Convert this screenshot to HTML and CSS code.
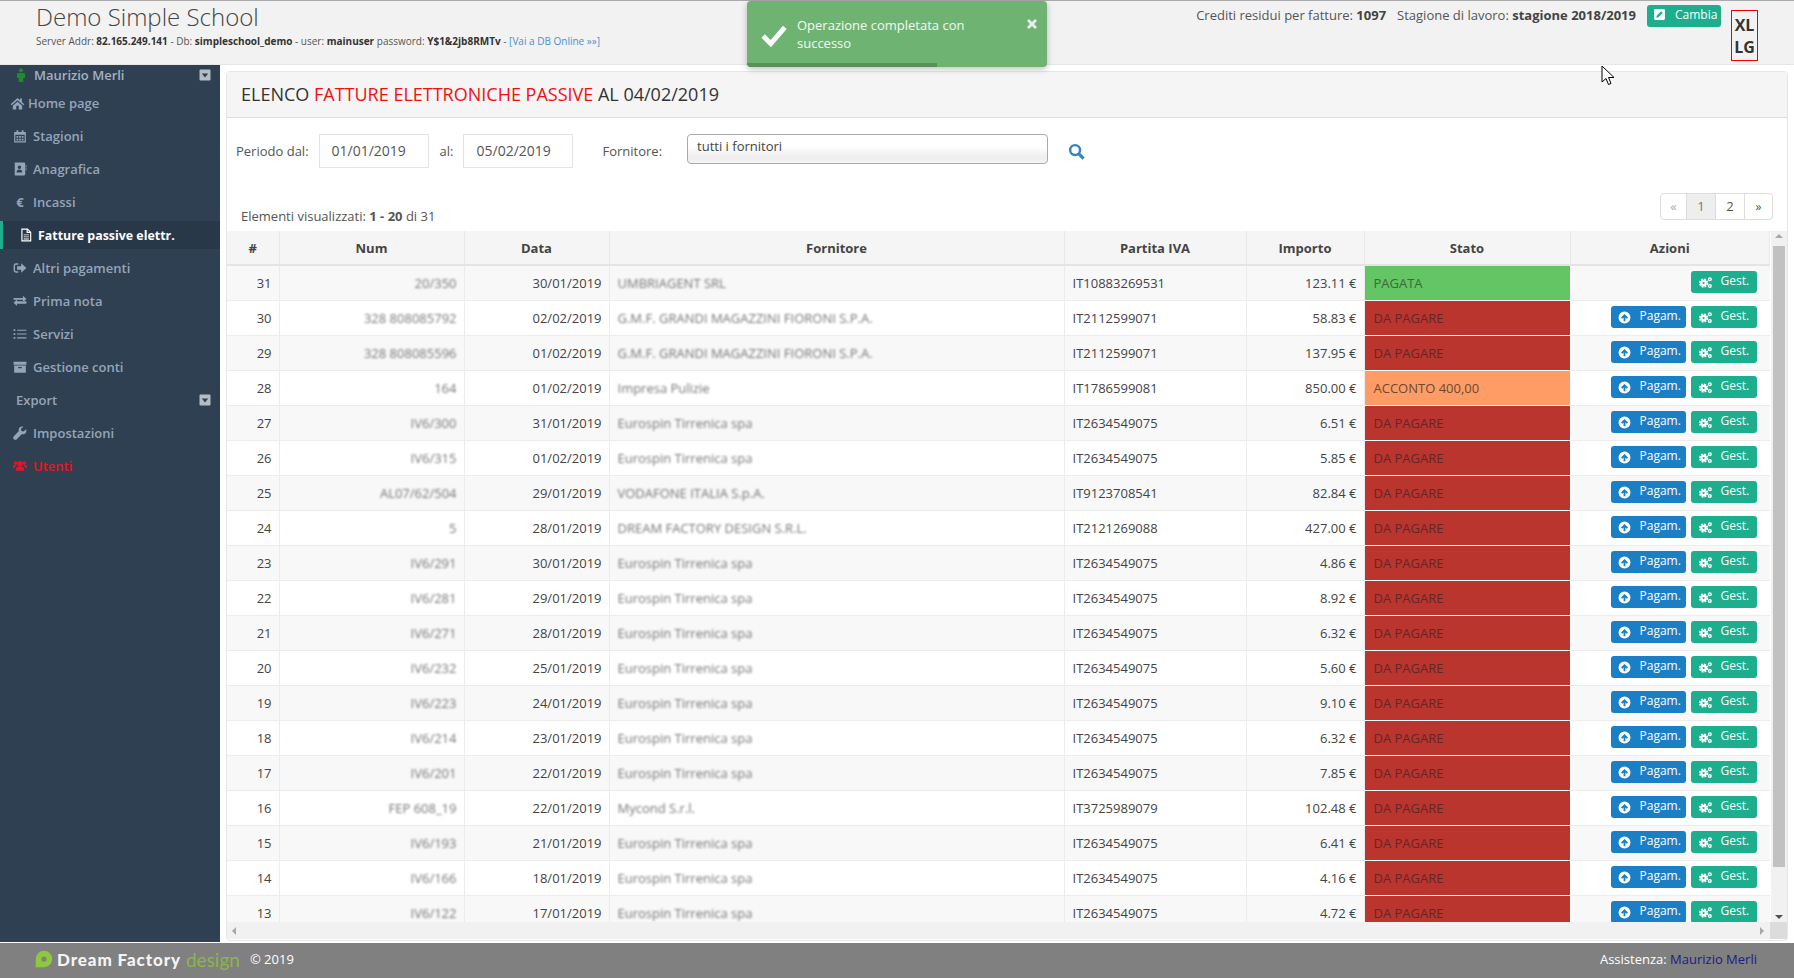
FILE: index.html
```html
<!DOCTYPE html>
<html lang="en">
<head>
    <meta charset="UTF-8">
    <title>Demo Simple School</title>
    <link rel="stylesheet" href="styles.css">
</head>
<body>
    <svg class="icon-defs" xmlns="http://www.w3.org/2000/svg">
        <symbol id="i-home" viewBox="0 0 24 24"><path d="M12 3 1 13l1.6 1.8L12 6.6l9.4 8.2L23 13l-4-3.5V4h-3v2.9zM4.500 15.500V21.500h5.500v-6h4v6h5.500v-6L12 9z"/></symbol>
        <symbol id="i-calendar" viewBox="0 0 24 24"><path fill-rule="evenodd" d="M2 5h4V2h3v3h6V2h3v3h4v18H2zM4 10v11h16V10zM6 12h3v3H6zm4.500 0h3v3h-3zm4.500 0h3v3h-3zM6 16.500h3v3H6zm4.500 0h3v3h-3zm4.500 0h3v3h-3z"/></symbol>
        <symbol id="i-book" viewBox="0 0 24 24"><path fill-rule="evenodd" d="M3 1h16a2 2 0 0 1 2 2v18a2 2 0 0 1-2 2H3zM11 6a3 3 0 1 0 0 6 3 3 0 0 0 0-6zM6 18h10c0-3-2-5-5-5s-5 2-5 5zM22 5h1v4h-1zm0 5h1v4h-1z"/></symbol>
        <symbol id="i-file" viewBox="0 0 24 24"><path fill-rule="evenodd" d="M4 1h11l6 6v16H4zM6 3v18h13V8.500h-6V3zm9 .5v3h3zM8 11h9v1.500H8zm0 3.500h9V16H8zm0 3.500h9v1.500H8z"/></symbol>
        <symbol id="i-out" viewBox="0 0 24 24"><path d="M9 4H5a4 4 0 0 0-4 4v8a4 4 0 0 0 4 4h4v-2.500H5A1.500 1.500 0 0 1 3.500 16V8A1.500 1.500 0 0 1 5 6.500h4zM14 4v5H7v6h7v5l9-8z"/></symbol>
        <symbol id="i-exchange" viewBox="0 0 24 24"><path d="M1 8h16V4l6 5.500-6 5.500v-4H1zM23 13.500H7v-3l-6 5.500 6 5.500v-4h16z" transform="translate(0 -1)"/></symbol>
        <symbol id="i-list" viewBox="0 0 24 24"><path d="M1 4h3v3H1zm6 .5h16v2H7zM1 10.500h3v3H1zm6 .5h16v2H7zM1 17h3v3H1zm6 .5h16v2H7z"/></symbol>
        <symbol id="i-archive" viewBox="0 0 24 24"><path fill-rule="evenodd" d="M1 3h22v5H1zM2 9.500h20V22H2zM9 12v2h6v-2z"/></symbol>
        <symbol id="i-wrench" viewBox="0 0 24 24"><path d="M22.500 5.500 18 9.500l-3.500-1-1-3.500L18 1c-3.500-1-7 .5-8 3.500-.5 1.500-.4 3 .1 4.200L1.500 17.500a3.500 3.500 0 0 0 5 5l8.800-8.800c1.300.5 2.800.5 4.200 0 3-1 4-4.700 3-8.200z"/></symbol>
        <symbol id="i-users" viewBox="0 0 24 24"><circle cx="12" cy="8" r="4.500"/><circle cx="4.500" cy="7" r="3"/><circle cx="19.500" cy="7" r="3"/><path d="M5 20v-3c0-3 3-4.500 7-4.500s7 1.500 7 4.500v3zM0 15v-2c0-2 2-3 4.500-3 .8 0 1.500.1 2 .3-1.500 1-2.800 2.500-3 4.700zM24 15v-2c0-2-2-3-4.500-3-.8 0-1.500.1-2 .3 1.500 1 2.800 2.500 3 4.700z"/></symbol>
        <symbol id="i-caret" viewBox="0 0 24 24"><path fill-rule="evenodd" d="M3 1h18a2 2 0 0 1 2 2v18a2 2 0 0 1-2 2H3a2 2 0 0 1-2-2V3a2 2 0 0 1 2-2zM5.500 9l6.500 8 6.500-8z"/></symbol>
        <symbol id="i-male" viewBox="0 0 24 24"><circle cx="12" cy="4" r="3.500"/><path d="M7 8.500h10a2 2 0 0 1 2 2V17h-3v7H8v-7H5v-6.500a2 2 0 0 1 2-2z"/></symbol>
        <symbol id="i-edit" viewBox="0 0 24 24"><path fill-rule="evenodd" d="M4 2h16a2 2 0 0 1 2 2v16a2 2 0 0 1-2 2H4a2 2 0 0 1-2-2V4a2 2 0 0 1 2-2zM15 6 7 14l-1 4 4-1 8-8z"/></symbol>
        <symbol id="i-up" viewBox="0 0 24 24"><path fill-rule="evenodd" d="M12 1a11 11 0 1 1 0 22 11 11 0 0 1 0-22zM12 5.500 5.500 12 8 14.300l2.300-2.300V19h3.400v-7l2.300 2.300L18.500 12z"/></symbol>
        <symbol id="i-cogs" viewBox="0 0 24 24"><circle cx="8.500" cy="13" r="4" fill="none" stroke="currentColor" stroke-width="4"/><circle cx="8.500" cy="13" r="7" fill="none" stroke="currentColor" stroke-width="3" stroke-dasharray="3.500 2"/><circle cx="20" cy="6" r="2.500" fill="none" stroke="currentColor" stroke-width="2.500"/><circle cx="20" cy="18.500" r="2.500" fill="none" stroke="currentColor" stroke-width="2.500"/></symbol>
    </svg>

    <header class="top">
        <div class="brand">
            <h1 class="brand-title">Demo Simple School</h1>
            <p class="brand-sub">Server Addr: <b>82.165.249.141</b> - Db: <b>simpleschool_demo</b> - user: <b>mainuser</b> password: <b>Y$1&amp;2jb8RMTv</b> - <a class="brand-link" href="#">[Vai a DB Online »»]</a></p>
        </div>
        <div class="top-right">
            <span class="top-info">Crediti residui per fatture: <b>1097</b></span>
            <span class="top-info">Stagione di lavoro: <b>stagione 2018/2019</b></span>
            <a class="btn btn-green btn-change" href="#"><svg class="btn-icon"><use href="#i-edit"/></svg>Cambia</a>
            <div class="size-box">XL<br>LG</div>
        </div>
    </header>

    <div class="toast">
        <svg class="toast-check" viewBox="0 0 24 24"><path d="M2 13l7 7L22 5" fill="none" stroke="#fff" stroke-width="4.500"/></svg>
        <span class="toast-text">Operazione completata con successo</span>
        <svg class="toast-close" viewBox="0 0 12 12"><path d="M2 2l8 8M10 2l-8 8" fill="none" stroke="#e4efe5" stroke-width="3"/></svg>
        <div class="toast-bar"></div>
    </div>

    <div class="middle">
        <nav class="side">
            <div class="side-user"><svg class="side-icon user-icon"><use href="#i-male"/></svg>Maurizio Merli<svg class="side-caret"><use href="#i-caret"/></svg></div>
            <a class="side-item side-home" href="#"><svg class="side-icon"><use href="#i-home"/></svg>Home page</a>
            <a class="side-item" href="#"><svg class="side-icon"><use href="#i-calendar"/></svg>Stagioni</a>
            <a class="side-item" href="#"><svg class="side-icon"><use href="#i-book"/></svg>Anagrafica</a>
            <a class="side-item" href="#"><span class="side-icon side-euro">€</span>Incassi</a>
            <a class="side-item side-active" href="#"><svg class="side-icon"><use href="#i-file"/></svg>Fatture passive elettr.</a>
            <a class="side-item" href="#"><svg class="side-icon"><use href="#i-out"/></svg>Altri pagamenti</a>
            <a class="side-item" href="#"><svg class="side-icon"><use href="#i-exchange"/></svg>Prima nota</a>
            <a class="side-item" href="#"><svg class="side-icon"><use href="#i-list"/></svg>Servizi</a>
            <a class="side-item" href="#"><svg class="side-icon"><use href="#i-archive"/></svg>Gestione conti</a>
            <a class="side-item side-export" href="#">Export<svg class="side-caret"><use href="#i-caret"/></svg></a>
            <a class="side-item" href="#"><svg class="side-icon"><use href="#i-wrench"/></svg>Impostazioni</a>
            <a class="side-item side-red" href="#"><svg class="side-icon"><use href="#i-users"/></svg>Utenti</a>
        </nav>

        <main class="main">
            <section class="panel">
                <h2 class="panel-title">ELENCO <span class="red">FATTURE ELETTRONICHE PASSIVE</span> AL 04/02/2019</h2>
                <div class="filters">
                    <label class="filter-label">Periodo dal:</label>
                    <div class="date-input">01/01/2019</div>
                    <label class="filter-label filter-al">al:</label>
                    <div class="date-input">05/02/2019</div>
                    <label class="filter-label filter-forn">Fornitore:</label>
                    <div class="select-box">tutti i fornitori</div>
                    <svg class="search-icon" viewBox="0 0 24 24"><circle cx="10" cy="10" r="7" fill="none" stroke="#3583c5" stroke-width="3.500"/><path d="M15 15l7 7" stroke="#3583c5" stroke-width="4.500"/></svg>
                </div>
                <div class="list-bar">
                    <span class="list-count">Elementi visualizzati: <b>1 - 20</b> di 31</span>
                    <ul class="pager">
                        <li class="pager-off">«</li>
                        <li class="pager-on">1</li>
                        <li>2</li>
                        <li class="pager-next">»</li>
                    </ul>
                </div>
                <div class="grid-wrap">
                    <div class="grid-clip">
                        <table class="grid">
                            <colgroup>
                                <col class="c-id"><col class="c-num"><col class="c-date"><col class="c-forn"><col class="c-iva"><col class="c-imp"><col class="c-stato"><col class="c-az">
                            </colgroup>
                            <thead>
                                <tr><th>#</th><th>Num</th><th>Data</th><th>Fornitore</th><th>Partita IVA</th><th>Importo</th><th>Stato</th><th>Azioni</th></tr>
                            </thead>
                            <tbody>
                                <tr><td class="r">31</td><td class="r"><span class="blur">20/350</span></td><td class="r">30/01/2019</td><td><span class="blur">UMBRIAGENT SRL</span></td><td>IT10883269531</td><td class="r">123.11 €</td><td class="st-ok">PAGATA</td><td class="acts"><a class="btn btn-green" href="#"><svg class="btn-icon"><use href="#i-cogs"/></svg>Gest.</a></td></tr>
                                <tr><td class="r">30</td><td class="r"><span class="blur">328 808085792</span></td><td class="r">02/02/2019</td><td><span class="blur">G.M.F. GRANDI MAGAZZINI FIORONI S.P.A.</span></td><td>IT2112599071</td><td class="r">58.83 €</td><td class="st-no">DA PAGARE</td><td class="acts"><a class="btn btn-blue" href="#"><svg class="btn-icon"><use href="#i-up"/></svg>Pagam.</a><a class="btn btn-green" href="#"><svg class="btn-icon"><use href="#i-cogs"/></svg>Gest.</a></td></tr>
                                <tr><td class="r">29</td><td class="r"><span class="blur">328 808085596</span></td><td class="r">01/02/2019</td><td><span class="blur">G.M.F. GRANDI MAGAZZINI FIORONI S.P.A.</span></td><td>IT2112599071</td><td class="r">137.95 €</td><td class="st-no">DA PAGARE</td><td class="acts"><a class="btn btn-blue" href="#"><svg class="btn-icon"><use href="#i-up"/></svg>Pagam.</a><a class="btn btn-green" href="#"><svg class="btn-icon"><use href="#i-cogs"/></svg>Gest.</a></td></tr>
                                <tr><td class="r">28</td><td class="r"><span class="blur">164</span></td><td class="r">01/02/2019</td><td><span class="blur">Impresa Pulizie</span></td><td>IT1786599081</td><td class="r">850.00 €</td><td class="st-part">ACCONTO 400,00</td><td class="acts"><a class="btn btn-blue" href="#"><svg class="btn-icon"><use href="#i-up"/></svg>Pagam.</a><a class="btn btn-green" href="#"><svg class="btn-icon"><use href="#i-cogs"/></svg>Gest.</a></td></tr>
                                <tr><td class="r">27</td><td class="r"><span class="blur">IV6/300</span></td><td class="r">31/01/2019</td><td><span class="blur">Eurospin Tirrenica spa</span></td><td>IT2634549075</td><td class="r">6.51 €</td><td class="st-no">DA PAGARE</td><td class="acts"><a class="btn btn-blue" href="#"><svg class="btn-icon"><use href="#i-up"/></svg>Pagam.</a><a class="btn btn-green" href="#"><svg class="btn-icon"><use href="#i-cogs"/></svg>Gest.</a></td></tr>
                                <tr><td class="r">26</td><td class="r"><span class="blur">IV6/315</span></td><td class="r">01/02/2019</td><td><span class="blur">Eurospin Tirrenica spa</span></td><td>IT2634549075</td><td class="r">5.85 €</td><td class="st-no">DA PAGARE</td><td class="acts"><a class="btn btn-blue" href="#"><svg class="btn-icon"><use href="#i-up"/></svg>Pagam.</a><a class="btn btn-green" href="#"><svg class="btn-icon"><use href="#i-cogs"/></svg>Gest.</a></td></tr>
                                <tr><td class="r">25</td><td class="r"><span class="blur">AL07/62/504</span></td><td class="r">29/01/2019</td><td><span class="blur">VODAFONE ITALIA S.p.A.</span></td><td>IT9123708541</td><td class="r">82.84 €</td><td class="st-no">DA PAGARE</td><td class="acts"><a class="btn btn-blue" href="#"><svg class="btn-icon"><use href="#i-up"/></svg>Pagam.</a><a class="btn btn-green" href="#"><svg class="btn-icon"><use href="#i-cogs"/></svg>Gest.</a></td></tr>
                                <tr><td class="r">24</td><td class="r"><span class="blur">5</span></td><td class="r">28/01/2019</td><td><span class="blur">DREAM FACTORY DESIGN S.R.L.</span></td><td>IT2121269088</td><td class="r">427.00 €</td><td class="st-no">DA PAGARE</td><td class="acts"><a class="btn btn-blue" href="#"><svg class="btn-icon"><use href="#i-up"/></svg>Pagam.</a><a class="btn btn-green" href="#"><svg class="btn-icon"><use href="#i-cogs"/></svg>Gest.</a></td></tr>
                                <tr><td class="r">23</td><td class="r"><span class="blur">IV6/291</span></td><td class="r">30/01/2019</td><td><span class="blur">Eurospin Tirrenica spa</span></td><td>IT2634549075</td><td class="r">4.86 €</td><td class="st-no">DA PAGARE</td><td class="acts"><a class="btn btn-blue" href="#"><svg class="btn-icon"><use href="#i-up"/></svg>Pagam.</a><a class="btn btn-green" href="#"><svg class="btn-icon"><use href="#i-cogs"/></svg>Gest.</a></td></tr>
                                <tr><td class="r">22</td><td class="r"><span class="blur">IV6/281</span></td><td class="r">29/01/2019</td><td><span class="blur">Eurospin Tirrenica spa</span></td><td>IT2634549075</td><td class="r">8.92 €</td><td class="st-no">DA PAGARE</td><td class="acts"><a class="btn btn-blue" href="#"><svg class="btn-icon"><use href="#i-up"/></svg>Pagam.</a><a class="btn btn-green" href="#"><svg class="btn-icon"><use href="#i-cogs"/></svg>Gest.</a></td></tr>
                                <tr><td class="r">21</td><td class="r"><span class="blur">IV6/271</span></td><td class="r">28/01/2019</td><td><span class="blur">Eurospin Tirrenica spa</span></td><td>IT2634549075</td><td class="r">6.32 €</td><td class="st-no">DA PAGARE</td><td class="acts"><a class="btn btn-blue" href="#"><svg class="btn-icon"><use href="#i-up"/></svg>Pagam.</a><a class="btn btn-green" href="#"><svg class="btn-icon"><use href="#i-cogs"/></svg>Gest.</a></td></tr>
                                <tr><td class="r">20</td><td class="r"><span class="blur">IV6/232</span></td><td class="r">25/01/2019</td><td><span class="blur">Eurospin Tirrenica spa</span></td><td>IT2634549075</td><td class="r">5.60 €</td><td class="st-no">DA PAGARE</td><td class="acts"><a class="btn btn-blue" href="#"><svg class="btn-icon"><use href="#i-up"/></svg>Pagam.</a><a class="btn btn-green" href="#"><svg class="btn-icon"><use href="#i-cogs"/></svg>Gest.</a></td></tr>
                                <tr><td class="r">19</td><td class="r"><span class="blur">IV6/223</span></td><td class="r">24/01/2019</td><td><span class="blur">Eurospin Tirrenica spa</span></td><td>IT2634549075</td><td class="r">9.10 €</td><td class="st-no">DA PAGARE</td><td class="acts"><a class="btn btn-blue" href="#"><svg class="btn-icon"><use href="#i-up"/></svg>Pagam.</a><a class="btn btn-green" href="#"><svg class="btn-icon"><use href="#i-cogs"/></svg>Gest.</a></td></tr>
                                <tr><td class="r">18</td><td class="r"><span class="blur">IV6/214</span></td><td class="r">23/01/2019</td><td><span class="blur">Eurospin Tirrenica spa</span></td><td>IT2634549075</td><td class="r">6.32 €</td><td class="st-no">DA PAGARE</td><td class="acts"><a class="btn btn-blue" href="#"><svg class="btn-icon"><use href="#i-up"/></svg>Pagam.</a><a class="btn btn-green" href="#"><svg class="btn-icon"><use href="#i-cogs"/></svg>Gest.</a></td></tr>
                                <tr><td class="r">17</td><td class="r"><span class="blur">IV6/201</span></td><td class="r">22/01/2019</td><td><span class="blur">Eurospin Tirrenica spa</span></td><td>IT2634549075</td><td class="r">7.85 €</td><td class="st-no">DA PAGARE</td><td class="acts"><a class="btn btn-blue" href="#"><svg class="btn-icon"><use href="#i-up"/></svg>Pagam.</a><a class="btn btn-green" href="#"><svg class="btn-icon"><use href="#i-cogs"/></svg>Gest.</a></td></tr>
                                <tr><td class="r">16</td><td class="r"><span class="blur">FEP 608_19</span></td><td class="r">22/01/2019</td><td><span class="blur">Mycond S.r.l.</span></td><td>IT3725989079</td><td class="r">102.48 €</td><td class="st-no">DA PAGARE</td><td class="acts"><a class="btn btn-blue" href="#"><svg class="btn-icon"><use href="#i-up"/></svg>Pagam.</a><a class="btn btn-green" href="#"><svg class="btn-icon"><use href="#i-cogs"/></svg>Gest.</a></td></tr>
                                <tr><td class="r">15</td><td class="r"><span class="blur">IV6/193</span></td><td class="r">21/01/2019</td><td><span class="blur">Eurospin Tirrenica spa</span></td><td>IT2634549075</td><td class="r">6.41 €</td><td class="st-no">DA PAGARE</td><td class="acts"><a class="btn btn-blue" href="#"><svg class="btn-icon"><use href="#i-up"/></svg>Pagam.</a><a class="btn btn-green" href="#"><svg class="btn-icon"><use href="#i-cogs"/></svg>Gest.</a></td></tr>
                                <tr><td class="r">14</td><td class="r"><span class="blur">IV6/166</span></td><td class="r">18/01/2019</td><td><span class="blur">Eurospin Tirrenica spa</span></td><td>IT2634549075</td><td class="r">4.16 €</td><td class="st-no">DA PAGARE</td><td class="acts"><a class="btn btn-blue" href="#"><svg class="btn-icon"><use href="#i-up"/></svg>Pagam.</a><a class="btn btn-green" href="#"><svg class="btn-icon"><use href="#i-cogs"/></svg>Gest.</a></td></tr>
                                <tr><td class="r">13</td><td class="r"><span class="blur">IV6/122</span></td><td class="r">17/01/2019</td><td><span class="blur">Eurospin Tirrenica spa</span></td><td>IT2634549075</td><td class="r">4.72 €</td><td class="st-no">DA PAGARE</td><td class="acts"><a class="btn btn-blue" href="#"><svg class="btn-icon"><use href="#i-up"/></svg>Pagam.</a><a class="btn btn-green" href="#"><svg class="btn-icon"><use href="#i-cogs"/></svg>Gest.</a></td></tr>
                            </tbody>
                        </table>
                    </div>
                    <div class="vbar">
                        <span class="arrow arrow-up"></span>
                        <span class="vbar-thumb"></span>
                        <span class="arrow arrow-down"></span>
                    </div>
                </div>
                <div class="hbar">
                    <span class="arrow arrow-left"></span>
                    <span class="arrow arrow-right"></span>
                    <span class="hbar-corner"></span>
                </div>
            </section>
        </main>
    </div>

    <footer class="foot">
        <div class="foot-left">
            <svg class="foot-leaf" viewBox="0 0 24 24"><path fill-rule="evenodd" d="M1 12a11 11 0 1 1 11 11H1zM12 8.500a3.500 3.500 0 1 0 0 7 3.500 3.500 0 0 0 0-7z" fill="#8fc73e"/></svg>
            <span class="foot-name">Dream Factory</span>
            <span class="foot-design">design</span>
            <span class="foot-copy">© 2019</span>
        </div>
        <div class="foot-right">Assistenza: <a class="foot-link" href="#">Maurizio Merli</a></div>
    </footer>

    <svg class="cursor" viewBox="0 0 14 21"><path d="M1 1v16l4-3.500 2.500 6 2.500-1-2.500-6H13z" fill="#fff" stroke="#000" stroke-width="1"/></svg>
</body>
</html>
```

FILE: styles.css
```css
* {
    box-sizing: border-box;
}

html, body {
    height: 100%;
}

body {
    margin: 0;
    display: flex;
    flex-direction: column;
    height: 978px;
    overflow: hidden;
    font-family: "Open Sans", sans-serif;
    font-size: 13px;
    color: #444;
    background-color: #fff;
}

a {
    text-decoration: none;
}

.icon-defs {
    display: none;
}

/* header */
.top {
    display: flex;
    justify-content: space-between;
    height: 65px;
    flex: none;
    background-color: #f2f2f2;
    border-top: 1px solid #aaa;
    border-bottom: 1px solid #e6e6e6;
    padding-left: 36px;
    padding-right: 36px;
}

.brand-title {
    margin: 1px 0 0;
    font-size: 24px;
    line-height: 30px;
    font-weight: 300;
    color: #444;
}

.brand-sub {
    margin: 2px 0 0;
    font-size: 10px;
    line-height: 14px;
    color: #555;
}

.brand-sub b {
    color: #333;
}

.brand-link {
    color: #4a90d0;
}

.top-right {
    display: flex;
    align-items: flex-start;
}

.top-info {
    margin-top: 6px;
    margin-right: 11px;
    line-height: 17px;
    color: #555;
}

.top-info b {
    color: #444;
}

.btn {
    display: inline-flex;
    align-items: center;
    height: 22px;
    padding-bottom: 3px;
    font-size: 12px;
    color: #fff;
    border-radius: 3px;
}

.btn-icon {
    width: 13px;
    height: 13px;
    margin-top: 3px;
    fill: currentColor;
}

.btn-green {
    background-color: #1cae8d;
}

.btn-blue {
    background-color: #1b7fc6;
}

.btn-change {
    width: 74px;
    margin-top: 4px;
    margin-left: 0;
    padding-left: 6px;
}

.btn-change .btn-icon {
    margin-top: 0;
    margin-right: 9px;
}

.size-box {
    width: 27px;
    height: 51px;
    margin-top: 9px;
    margin-left: 10px;
    padding-top: 3px;
    border: 1px solid #e00;
    text-align: center;
    font-size: 16px;
    font-weight: 700;
    line-height: 22px;
    color: #333;
}

/* toast */
.toast {
    position: absolute;
    left: 747px;
    top: 1px;
    width: 300px;
    height: 66px;
    background-color: #6fb373;
    border-radius: 4px;
    overflow: hidden;
    box-shadow: 0 2px 6px rgba(0, 0, 0, 0.25);
    color: #f4f9f4;
}

.toast-check {
    position: absolute;
    left: 14px;
    top: 21px;
    width: 26px;
    height: 26px;
}

.toast-text {
    position: absolute;
    left: 50px;
    top: 15px;
    width: 190px;
    font-size: 13px;
    line-height: 18px;
}

.toast-close {
    position: absolute;
    left: 279px;
    top: 17px;
    width: 12px;
    height: 12px;
}

.toast-bar {
    position: absolute;
    left: 0;
    bottom: 0;
    width: 190px;
    height: 4px;
    background-color: #5b8f5e;
}

/* sidebar */
.middle {
    display: flex;
    flex: 1;
    min-height: 0;
}

.side {
    width: 220px;
    flex: none;
    background-color: #2f4052;
    color: #95a5b8;
    font-weight: 600;
    font-size: 13px;
}

.side-user {
    position: relative;
    display: flex;
    align-items: center;
    height: 20px;
    margin-bottom: 4px;
    padding-left: 14px;
    color: #a3b1c2;
}

.user-icon {
    color: #1f8a2e;
}

.side-item {
    position: relative;
    display: flex;
    align-items: center;
    height: 28px;
    margin-bottom: 5px;
    padding-left: 13px;
    color: #95a5b8;
}

.side-icon {
    width: 14px;
    height: 14px;
    margin-right: 6px;
    fill: currentColor;
    flex: none;
}

.side-euro {
    font-weight: 700;
    text-align: center;
    line-height: 14px;
}

.side-home {
    padding-left: 10px;
}

.side-home .side-icon {
    width: 15px;
    height: 15px;
    margin-right: 3px;
}

.side-active {
    background-color: #293848;
    border-left: 3px solid #1cae8d;
    padding-left: 16px;
    color: #fff;
    font-weight: 700;
    font-size: 12.400px;
}

.side-active .side-icon {
    margin-right: 5px;
}

.side-export {
    padding-left: 16px;
}

.side-red {
    color: #f01020;
}

.side-caret {
    position: absolute;
    right: 9px;
    width: 12px;
    height: 12px;
    fill: #b4bcc6;
}

/* main */
.main {
    flex: 1;
    min-width: 0;
    padding: 6px 6px 1px;
}

.panel {
    display: flex;
    flex-direction: column;
    height: 100%;
    border: 1px solid #e6e6e6;
    border-radius: 4px;
}

.panel-title {
    flex: none;
    height: 46px;
    margin: 0;
    padding-left: 14px;
    background-color: #f5f5f5;
    border-bottom: 1px solid #ddd;
    font-size: 18px;
    font-weight: 400;
    line-height: 44px;
    color: #333;
}

.red {
    color: #f01010;
}

.filters {
    display: flex;
    align-items: flex-start;
    height: 59px;
    margin-top: 16px;
    padding-left: 9px;
    flex: none;
}

.filter-label {
    line-height: 34px;
    color: #555;
}

.filter-al {
    margin-left: 11px;
}

.filter-forn {
    margin-left: 29px;
}

.date-input {
    width: 110px;
    height: 34px;
    margin-left: 10px;
    padding-left: 12px;
    border: 1px solid #e4e4e4;
    font-size: 14px;
    line-height: 32px;
    color: #555;
}

.select-box {
    width: 361px;
    height: 30px;
    margin-left: 25px;
    padding-left: 9px;
    border: 1px solid #aaa;
    border-radius: 4px;
    background: linear-gradient(#fff 40%, #eee 80%, #f4f4f4);
    line-height: 22px;
    color: #444;
}

.search-icon {
    width: 17px;
    height: 17px;
    margin-left: 20px;
    margin-top: 9px;
}

.list-bar {
    display: flex;
    align-items: flex-end;
    justify-content: space-between;
    flex: none;
    height: 27px;
    margin-bottom: 11px;
    padding-left: 14px;
    padding-right: 14px;
}

.list-count {
    margin-bottom: -5px;
    font-size: 13px;
    color: #555;
}

.pager {
    display: flex;
    margin: 0;
    padding: 0;
    list-style: none;
    border: 1px solid #ddd;
    border-radius: 4px;
    height: 27px;
    line-height: 25px;
    color: #555;
}

.pager li {
    width: 29px;
    text-align: center;
    border-right: 1px solid #ddd;
}

.pager .pager-next {
    border-right: none;
    width: 27px;
    font-size: 12px;
}

.pager .pager-off {
    width: 26px;
    color: #aaa;
}

.pager .pager-on {
    background-color: #eee;
    color: #777;
}

/* table */
.grid-wrap {
    display: flex;
    flex: 1;
    min-height: 0;
}

.grid-clip {
    flex: none;
    width: 1543px;
    overflow: hidden;
}

.grid {
    table-layout: fixed;
    width: 1543px;
    border-collapse: collapse;
    color: #444;
}

.c-id { width: 52px; }
.c-num { width: 185px; }
.c-date { width: 145px; }
.c-forn { width: 455px; }
.c-iva { width: 182px; }
.c-imp { width: 118px; }
.c-stato { width: 206px; }

.grid th {
    height: 34px;
    padding: 0;
    background-color: #f5f5f5;
    border: 1px solid #e8e8e8;
    border-top: none;
    border-bottom: 2px solid #e4e4e4;
    font-weight: 700;
    color: #444;
}

.grid td {
    height: 35px;
    padding: 0 8px;
    border: 1px solid #ececec;
    white-space: nowrap;
    overflow: hidden;
}

.grid th:first-child,
.grid td:first-child {
    border-left: none;
}

.grid tbody tr:nth-child(odd) {
    background-color: #f8f8f8;
}

.grid .r {
    text-align: right;
    padding-right: 7px;
}

.blur {
    display: inline-block;
    filter: blur(1.100px);
    color: #777;
}

.grid .st-ok,
.grid .st-no,
.grid .st-part {
    padding-left: 9px;
    border-color: #fff;
}

.grid .st-ok {
    background-color: #63c563;
    color: #3a6a3a;
}

.grid .st-no {
    background-color: #b9352e;
    color: #662626;
}

.grid .st-part {
    background-color: #ff9c66;
    color: #6a4a30;
}

.grid .acts {
    padding: 0 13px 0 0;
    text-align: right;
    border-left: none;
    border-right: none;
}

.acts .btn {
    margin-left: 5px;
    vertical-align: middle;
    margin-bottom: 1px;
}

.acts .btn-icon {
    margin-right: 9px;
}

.acts .btn-blue {
    width: 75px;
    padding-left: 7px;
}

.acts .btn-green {
    width: 66px;
    padding-left: 8px;
}

/* fake scrollbars */
.vbar {
    display: flex;
    flex-direction: column;
    align-items: center;
    flex: 1;
    margin-left: 1px;
    background-color: #f1f1f1;
}

.vbar-thumb {
    width: 12px;
    height: 621px;
    background-color: #c1c1c1;
}

.arrow {
    width: 0;
    height: 0;
    border: 4px solid transparent;
}

.arrow-up {
    margin: 3px 0 8px;
    border-bottom-color: #a8a8a8;
    border-top: none;
}

.arrow-down {
    margin-top: auto;
    margin-bottom: 3px;
    border-top-color: #505050;
    border-bottom: none;
}

.hbar {
    display: flex;
    align-items: center;
    flex: none;
    height: 17px;
    background-color: #f1f1f1;
    padding-left: 5px;
    margin-bottom: 1px;
}

.arrow-left {
    border-right-color: #a8a8a8;
    border-left: none;
}

.arrow-right {
    margin-left: auto;
    margin-right: 6px;
    border-left-color: #a8a8a8;
    border-right: none;
}

.hbar-corner {
    width: 17px;
    height: 17px;
    background-color: #dcdcdc;
}

/* footer */
.foot {
    display: flex;
    justify-content: space-between;
    align-items: center;
    flex: none;
    height: 36px;
    padding: 0 37px 3px 35px;
    background-color: #808080;
    border-top: 1px solid #fff;
    color: #fff;
}

.foot-left {
    display: flex;
    align-items: center;
}

.foot-leaf {
    width: 18px;
    height: 18px;
    margin-right: 4px;
}

.foot-name {
    font-family: "Lato", sans-serif;
    font-size: 17px;
    font-weight: 900;
    letter-spacing: 0.900px;
    color: #f4f4f4;
}

.foot-design {
    margin-left: 5px;
    font-family: "Lato", sans-serif;
    font-size: 19px;
    font-weight: 400;
    color: #8cb648;
}

.foot-copy {
    margin-left: 10px;
}

.foot-link {
    color: #1b1b8a;
}

.cursor {
    position: absolute;
    left: 1601px;
    top: 65px;
    width: 14px;
    height: 21px;
}
```
